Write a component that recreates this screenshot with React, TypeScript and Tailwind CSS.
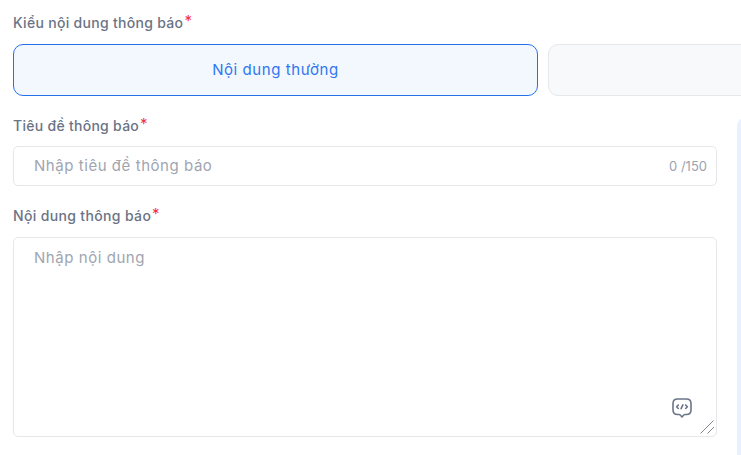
import type { ReactNode } from 'react';

function FieldLabel({ children, width }: { children: ReactNode; width: string }) {
  return (
    <div className="flex h-5 items-center text-[14px] leading-5 font-medium text-[#6b7385]">
      <span className={`whitespace-nowrap ${width}`}>{children}</span>
      <span className="-mt-1 ml-[1.5px] text-[15px] font-normal text-[#f5303f]">*</span>
    </div>
  );
}

function VariableIcon() {
  return (
    <svg width="20" height="20" viewBox="0 0 20 20" fill="none" stroke="#6b7488" strokeWidth="1.6" strokeLinecap="round" strokeLinejoin="round">
      <path d="M5.500 1h9C17.500 1 19 2.500 19 5.500v6.500c0 3-1.500 4.500-4.500 4.500h-1.600c-.5 0-.8.2-1.100.5L10 19l-1.800-2c-.3-.3-.6-.5-1.100-.5H5.500C2.500 16.500 1 15 1 12V5.500C1 2.500 2.500 1 5.500 1z" />
      <path d="M6.300 7.100 4.600 8.800l1.700 1.700M13.700 7.100l1.700 1.700-1.700 1.700M10.900 6.900l-1.800 3.800" />
    </svg>
  );
}

function ResizeGrip() {
  return (
    <svg width="15" height="15" viewBox="0 0 15 15" fill="none" stroke="#85858d" strokeWidth="1">
      <path d="M.5 13.500 13.500.5M7.500 13.500 14 7" />
    </svg>
  );
}

export default function App() {
  return (
    <main className="h-[455px] w-full overflow-hidden bg-white pl-[13px] pt-[13px] font-['Inter','Liberation_Sans',sans-serif]">
      <FieldLabel width="w-[170px] tracking-[0.3px]">Kiểu nội dung thông báo</FieldLabel>
      <div className="mt-[11px] flex gap-2.5">
        <button className="h-[52px] w-[525px] shrink-0 rounded-[10px] border border-[#2570eb] bg-[#f3f8ff] text-[15px] tracking-[0.57px] text-[#2f76f0]">
          Nội dung thường
        </button>
        <button aria-label="Nội dung khác" className="h-[52px] w-[525px] shrink-0 rounded-[10px] border border-[#e5e7eb] bg-[#f8f9fb]" />
      </div>
      <div className="flex gap-5">
        <div className="w-[704px] shrink-0 pt-5">
          <FieldLabel width="w-[125.500px] tracking-[0.28px]">Tiêu đề thông báo</FieldLabel>
          <div className="mt-2.5 flex h-10 items-center rounded-[5px] border border-[#e5e7eb] pl-5 pr-[9px]">
            <input
              className="min-w-0 flex-1 text-[15px] tracking-[0.55px] outline-none placeholder:text-[#a0a5b0]"
              placeholder="Nhập tiêu đề thông báo"
            />
            <span className="pt-0.5 text-[13px] text-[#9ca3af]">0 /150</span>
          </div>
          <div className="mt-5">
            <FieldLabel width="w-[137.500px] tracking-[0.35px]">Nội dung thông báo</FieldLabel>
          </div>
          <div className="relative mt-[11px]">
            <textarea
              className="block h-[200px] w-full resize-none rounded-[5px] border border-[#e5e7eb] px-5 py-2 text-[15px] leading-6 tracking-[0.55px] outline-none placeholder:text-[#a0a5b0]"
              placeholder="Nhập nội dung"
            />
            <div className="absolute right-[25px] bottom-[19px]">
              <VariableIcon />
            </div>
            <div className="absolute right-0.5 bottom-0.5">
              <ResizeGrip />
            </div>
          </div>
        </div>
        <aside className="mt-[22px] h-[400px] w-20 shrink-0 rounded-lg bg-[#e8f1ff]" />
      </div>
    </main>
  );
}
